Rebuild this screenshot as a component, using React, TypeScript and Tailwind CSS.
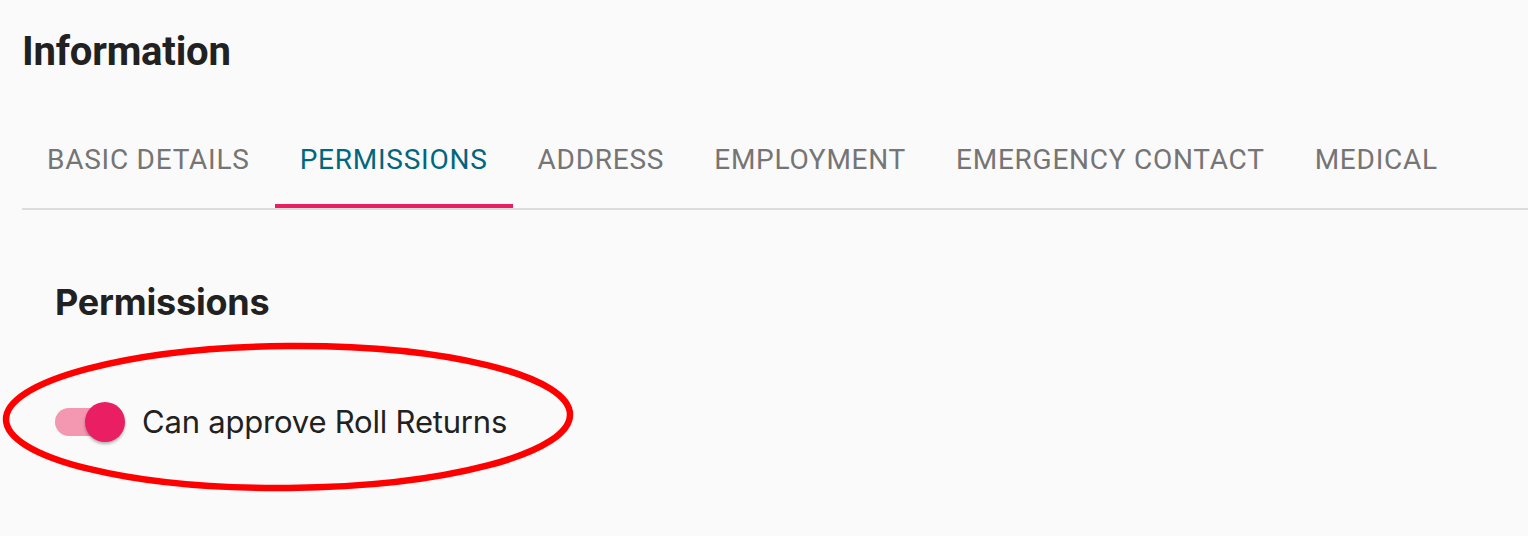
const tabs = ["BASIC DETAILS", "PERMISSIONS", "ADDRESS", "EMPLOYMENT", "EMERGENCY CONTACT", "MEDICAL"];

export default function App() {
    const active = 1;
    return (
        <div className="relative w-[1528px] h-[536px] overflow-hidden bg-[#fafafa] font-['Roboto',sans-serif]">
            <div className="pl-[22px] pt-[28px]">
                <h1 className="text-[40px] leading-[48px] font-bold tracking-[-0.2px] text-[#212121]">Information</h1>

                <div className="mt-[36px] flex border-b-2 border-[#dcdcdc]">
                    {tabs.map((t, i) => (
                        <div
                            key={t}
                            className={
                                "relative h-[96px] px-[25px] flex items-center text-[28px] tracking-[0.75px] " +
                                (i === active ? "text-[#00677f]" : "text-[#757575]")
                            }
                        >
                            {t}
                            {i === active && <div className="absolute left-0 right-0 bottom-0 h-[4px] bg-[#e91e63]" />}
                        </div>
                    ))}
                </div>

                <div className="pl-[33px] pt-[72px] font-['Inter',sans-serif]">
                    <h2 className="text-[36px] leading-[40px] font-bold tracking-[-0.2px] text-[#212121]">Permissions</h2>
                    <div className="mt-[80px] flex items-center gap-[19px]">
                        <div className="relative w-[68px] h-[40px] flex items-center">
                            <div className="w-[68px] h-[28px] rounded-full bg-[#f497b1]" />
                            <div className="absolute right-[-2px] top-0 w-[40px] h-[40px] rounded-full bg-[#e91e63] shadow-[0_2px_3px_rgba(0,0,0,0.3)]" />
                        </div>
                        <span className="text-[31px] leading-[40px] tracking-[-0.2px] text-[#212121]">Can approve Roll Returns</span>
                    </div>
                </div>
            </div>

            <svg className="absolute left-0 top-0 pointer-events-none" width="1528" height="536">
                <ellipse cx="288" cy="417" rx="282" ry="71" fill="none" stroke="#ff0000" strokeWidth="6.5" transform="rotate(-0.5 288 417)" />
            </svg>
        </div>
    );
}
